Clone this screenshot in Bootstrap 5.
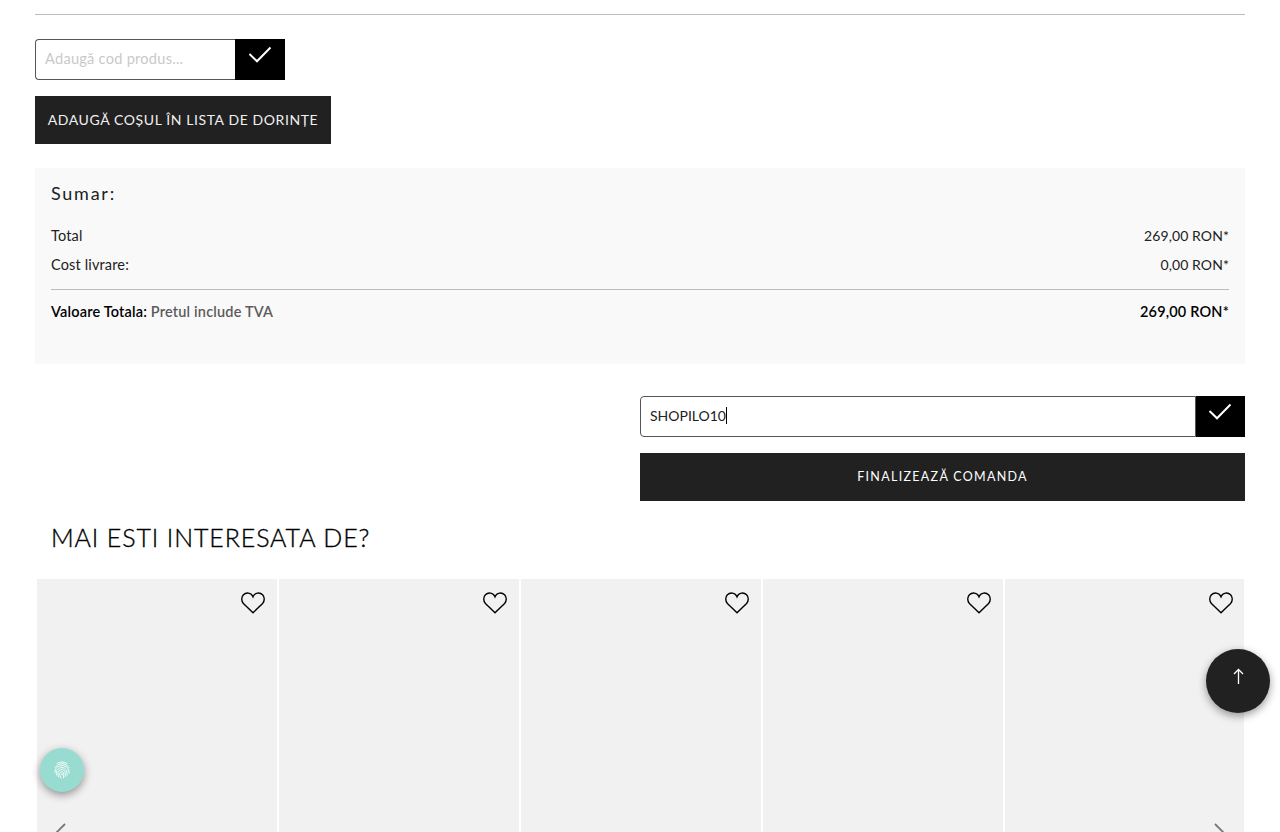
<!DOCTYPE html>
<html lang="ro">
<head>
<meta charset="utf-8">
<meta name="viewport" content="width=device-width, initial-scale=1">
<title>Coș de cumpărături</title>
<link href="https://cdn.jsdelivr.net/npm/bootstrap@5.3.0/dist/css/bootstrap.min.css" rel="stylesheet">
<script src="https://cdn.jsdelivr.net/npm/bootstrap@5.3.0/dist/js/bootstrap.bundle.min.js" defer></script>
<style>
body{font-family:Lato,"Open Sans",sans-serif;font-size:14px;line-height:20px;color:#212121;background:#fff;height:832px;overflow:hidden}
.shop{width:1210px;margin:0 auto;padding-top:14px}
.rule{height:1px;background:#bcbcbf}
.code-form{height:41px}
.code-form .form-control{border:1px solid #555;border-radius:4px 0 0 4px;font-size:14px;line-height:20px;padding:0 9px 2px;color:#212121;box-shadow:none;height:41px}
.code-form .form-control::placeholder{color:#c9c9c9;opacity:1;font-size:14.6px;letter-spacing:.25px}
.code-form .btn{display:flex;align-items:flex-start;width:50px;height:41px;background:#000;border:0;border-radius:0;padding:7px 0 0 13px}
.coupon-form .btn{width:49px;padding-left:12px}
.code-form svg,.like svg,.to-top svg{display:block}
.product-code{width:250px;margin-top:24px}
.dark-btn{height:48px;border:0;border-radius:0;background:#212121;color:#fff;padding:0}
.dark-btn:hover{background:#212121;color:#fff}
.wish{width:296px;font-size:14px;letter-spacing:.6px;padding-bottom:2px;color:#f0f0f0}
.finish{font-size:12.5px;letter-spacing:1.3px;padding-top:1px}
.summary{height:196px;background:#f9f9f9}
.summary h2{font-size:18px;line-height:20px;letter-spacing:1.75px;font-weight:400;margin:-1px 0 23px}
.line-item{height:29px;font-size:14.5px;letter-spacing:.15px}
.price{font-size:14px;letter-spacing:.1px}
.summary-rule{margin-top:5px}
.grand{font-weight:600;color:#000;margin-top:12px;font-size:14.5px;letter-spacing:.18px}
.grand .vat{color:#5c5c5c}
.checkout{width:605px}
.coupon-form{margin-top:32px}
.caret{width:1px;height:17px;background:#000}
.more-title{font-size:25px;line-height:30px;font-weight:300;letter-spacing:.87px;color:#000;margin:21px 0 27px 16px;-webkit-text-stroke:.35px #000}
.tile{width:240px;height:253px;margin-left:2px;background:#f1f1f1;padding:13px 12px 0 0}
.tile:last-child{width:239px;padding-right:11px}
.float-btn{position:fixed;border-radius:50%;box-shadow:0 3px 8px rgba(0,0,0,.4)}
.to-top{left:1206px;top:649px;width:64px;height:64px;background:#212121;padding:19px 0 0 26px}
.privacy{left:40px;top:748px;width:44px;height:44px;background:#98dcd1}
.arrow{position:fixed;top:823px}
.arrow-prev{left:55px}
.arrow-next{left:1214px}
</style>
</head>
<body>
<svg class="d-none" xmlns="http://www.w3.org/2000/svg">
  <symbol id="heart" viewBox="0 0 24 23"><path d="M12 20.800 2.400 11.400C.2 9.200.2 5 2.400 2.800 5 .2 10.200.2 12 4.800 13.800.2 19 .2 21.600 2.800 23.800 5 23.800 9.200 21.600 11.400Z"/></symbol>
  <symbol id="check" viewBox="0 0 24 18"><path d="M1.500 8 9 15.300 22.500 1.500"/></symbol>
</svg>
<main class="shop">
  <div class="rule"></div>
  <form class="product-code code-form d-flex">
    <input class="form-control border-end-0" type="text" placeholder="Adaugă cod produs..." aria-label="Cod produs">
    <button class="btn flex-shrink-0" type="button" aria-label="Adaugă"><svg width="24" height="18" fill="none" stroke="#fff" stroke-width="2"><use href="#check"/></svg></button>
  </form>
  <button class="btn dark-btn wish d-block mt-3" type="button">ADAUGĂ COȘUL ÎN LISTA DE DORINȚE</button>

  <section class="summary mt-4 p-3">
    <h2>Sumar:</h2>
    <div class="line-item d-flex justify-content-between"><span>Total</span><span class="price">269,00 RON*</span></div>
    <div class="line-item d-flex justify-content-between"><span>Cost livrare:</span><span class="price">0,00 RON*</span></div>
    <div class="rule summary-rule"></div>
    <div class="grand d-flex justify-content-between"><span>Valoare Totala: <span class="vat">Pretul include TVA</span></span><span>269,00 RON*</span></div>
  </section>

  <div class="checkout ms-auto">
    <div class="code-form coupon-form d-flex">
      <div class="form-control d-flex align-items-center"><span>SHOPILO10</span><i class="caret"></i></div>
      <button class="btn flex-shrink-0" type="button" aria-label="Aplică"><svg width="24" height="18" fill="none" stroke="#fff" stroke-width="2"><use href="#check"/></svg></button>
    </div>
    <button class="btn dark-btn finish w-100 d-block mt-3" type="button">FINALIZEAZĂ COMANDA</button>
  </div>

  <h2 class="more-title">MAI ESTI INTERESATA DE?</h2>
  <div class="d-flex">
    <div class="tile like d-flex justify-content-end"><svg width="24" height="23" fill="none" stroke="#000" stroke-width="1.400"><use href="#heart"/></svg></div>
    <div class="tile like d-flex justify-content-end"><svg width="24" height="23" fill="none" stroke="#000" stroke-width="1.400"><use href="#heart"/></svg></div>
    <div class="tile like d-flex justify-content-end"><svg width="24" height="23" fill="none" stroke="#000" stroke-width="1.400"><use href="#heart"/></svg></div>
    <div class="tile like d-flex justify-content-end"><svg width="24" height="23" fill="none" stroke="#000" stroke-width="1.400"><use href="#heart"/></svg></div>
    <div class="tile like d-flex justify-content-end"><svg width="24" height="23" fill="none" stroke="#000" stroke-width="1.400"><use href="#heart"/></svg></div>
  </div>
</main>

<svg class="arrow arrow-prev" width="11" height="9" viewBox="0 0 11 9" fill="none" stroke="#777" stroke-width="1.800"><path d="M10 1 1 10"/></svg>
<svg class="arrow arrow-next" width="11" height="9" viewBox="0 0 11 9" fill="none" stroke="#777" stroke-width="1.800"><path d="m1 1 9 9"/></svg>

<div class="float-btn privacy d-flex align-items-center justify-content-center">
  <svg width="16" height="18" viewBox="0 0 16 18" fill="none" stroke="#fff" stroke-width=".9" stroke-linecap="round"><path d="M3 2.500Q8-.8 13 2.500M1 6.500Q3.500 2.600 8 2.600T15 6.500M1 11.500C.5 7.500 4 4.600 8 4.600s7.500 3 7 7.400M2.500 14C1.500 9.500 4.500 6.600 8 6.600s5.500 3 5 7.600M4.500 15.800C3 11.500 5 8.600 8 8.600s3.500 2.400 3.200 7M7 17C4.500 13 6 10.600 8 10.600s1.500 2.400 1.500 6.200M8 12.500V14"/></svg>
</div>
<div class="float-btn to-top"><svg width="12" height="17" viewBox="0 0 12 17" fill="none" stroke="#fff" stroke-width="1.300"><path d="M6.500 16V1.500M2 6 6.500 1.500 11 6"/></svg></div>
</body>
</html>
